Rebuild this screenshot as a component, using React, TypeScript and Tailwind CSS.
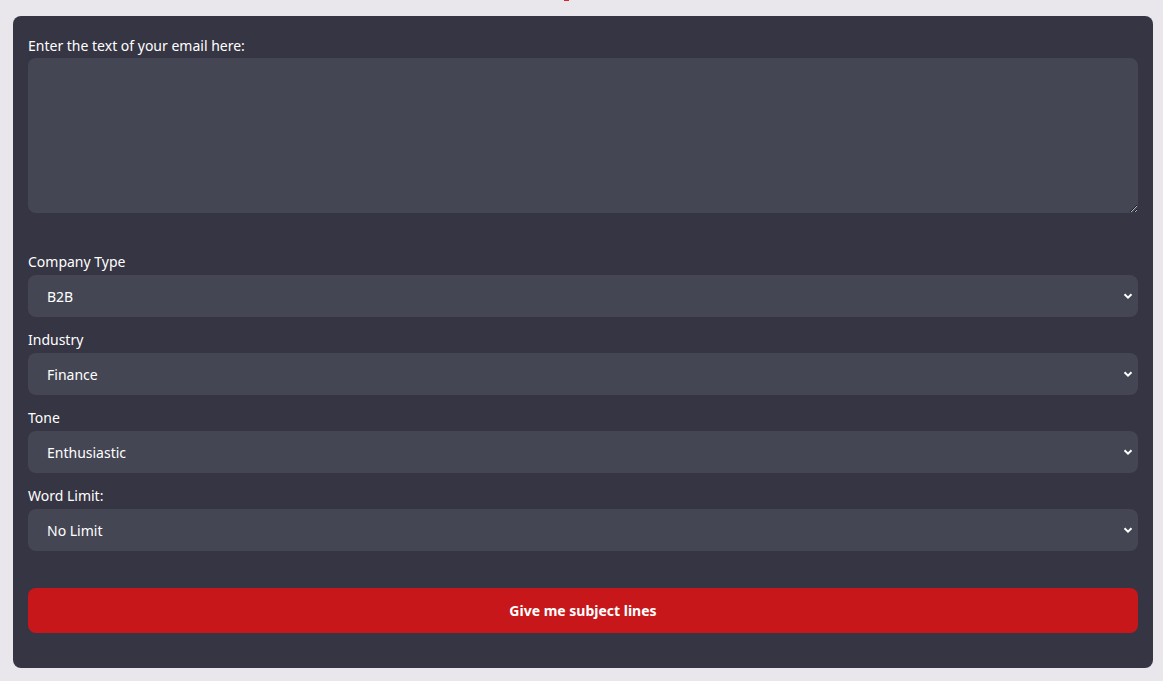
import { useState } from "react";

const fieldClass =
  "w-full h-[42px] appearance-none rounded-lg bg-[#454654] pl-[19px] pr-10 text-[14px] text-white outline-none";

type SelectProps = {
  label: string;
  value: string;
  options: string[];
  onChange: (v: string) => void;
};

function Chevron() {
  return (
    <svg
      className="pointer-events-none absolute right-[5px] top-1/2 -translate-y-1/2"
      width="10"
      height="8"
      viewBox="0 0 10 8"
      fill="none"
    >
      <path d="M1.5 2.2 5 5.6 8.5 2.2" stroke="#ffffff" strokeWidth="2" />
    </svg>
  );
}

function SelectField({ label, value, options, onChange }: SelectProps) {
  return (
    <div className="mb-3">
      <label className="mb-[2px] block leading-[22px]">{label}</label>
      <div className="relative">
        <select className={fieldClass} value={value} onChange={(e) => onChange(e.target.value)}>
          {options.map((o) => (
            <option key={o}>{o}</option>
          ))}
        </select>
        <Chevron />
      </div>
    </div>
  );
}

export default function App() {
  const [email, setEmail] = useState("");
  const [company, setCompany] = useState("B2B");
  const [industry, setIndustry] = useState("Finance");
  const [tone, setTone] = useState("Enthusiastic");
  const [limit, setLimit] = useState("No Limit");

  return (
    <div
      className="min-h-[681px] bg-[#e9e7ec] pl-[13px] pr-[10px] pb-[13px]"
      style={{ fontFamily: '"Noto Sans", "Open Sans", sans-serif' }}
    >
      <div className="ml-[551px] h-px w-[5px] bg-[#d8262a]" />
      <div className="mt-[15px] rounded-lg bg-[#363543] px-[15px] pb-[35px] pt-[19px] text-[14px] text-white">
        <label className="mb-[2px] block leading-[21px]">Enter the text of your email here:</label>
        <textarea
          className="block h-[155px] w-full rounded-lg bg-[#454654] px-[19px] py-3 text-[14px] text-white outline-none"
          value={email}
          onChange={(e) => setEmail(e.target.value)}
        />
        <div className="h-[38px]" />
        <SelectField label="Company Type" value={company} options={["B2B", "B2C"]} onChange={setCompany} />
        <SelectField
          label="Industry"
          value={industry}
          options={["Finance", "Technology", "Healthcare", "Retail"]}
          onChange={setIndustry}
        />
        <SelectField
          label="Tone"
          value={tone}
          options={["Enthusiastic", "Professional", "Friendly", "Urgent"]}
          onChange={setTone}
        />
        <SelectField
          label="Word Limit:"
          value={limit}
          options={["No Limit", "5 words", "10 words"]}
          onChange={setLimit}
        />
        <button className="mt-[37px] block h-[45px] w-full rounded-lg bg-[#c8171a] text-[14px] font-bold text-white">
          Give me subject lines
        </button>
      </div>
    </div>
  );
}
